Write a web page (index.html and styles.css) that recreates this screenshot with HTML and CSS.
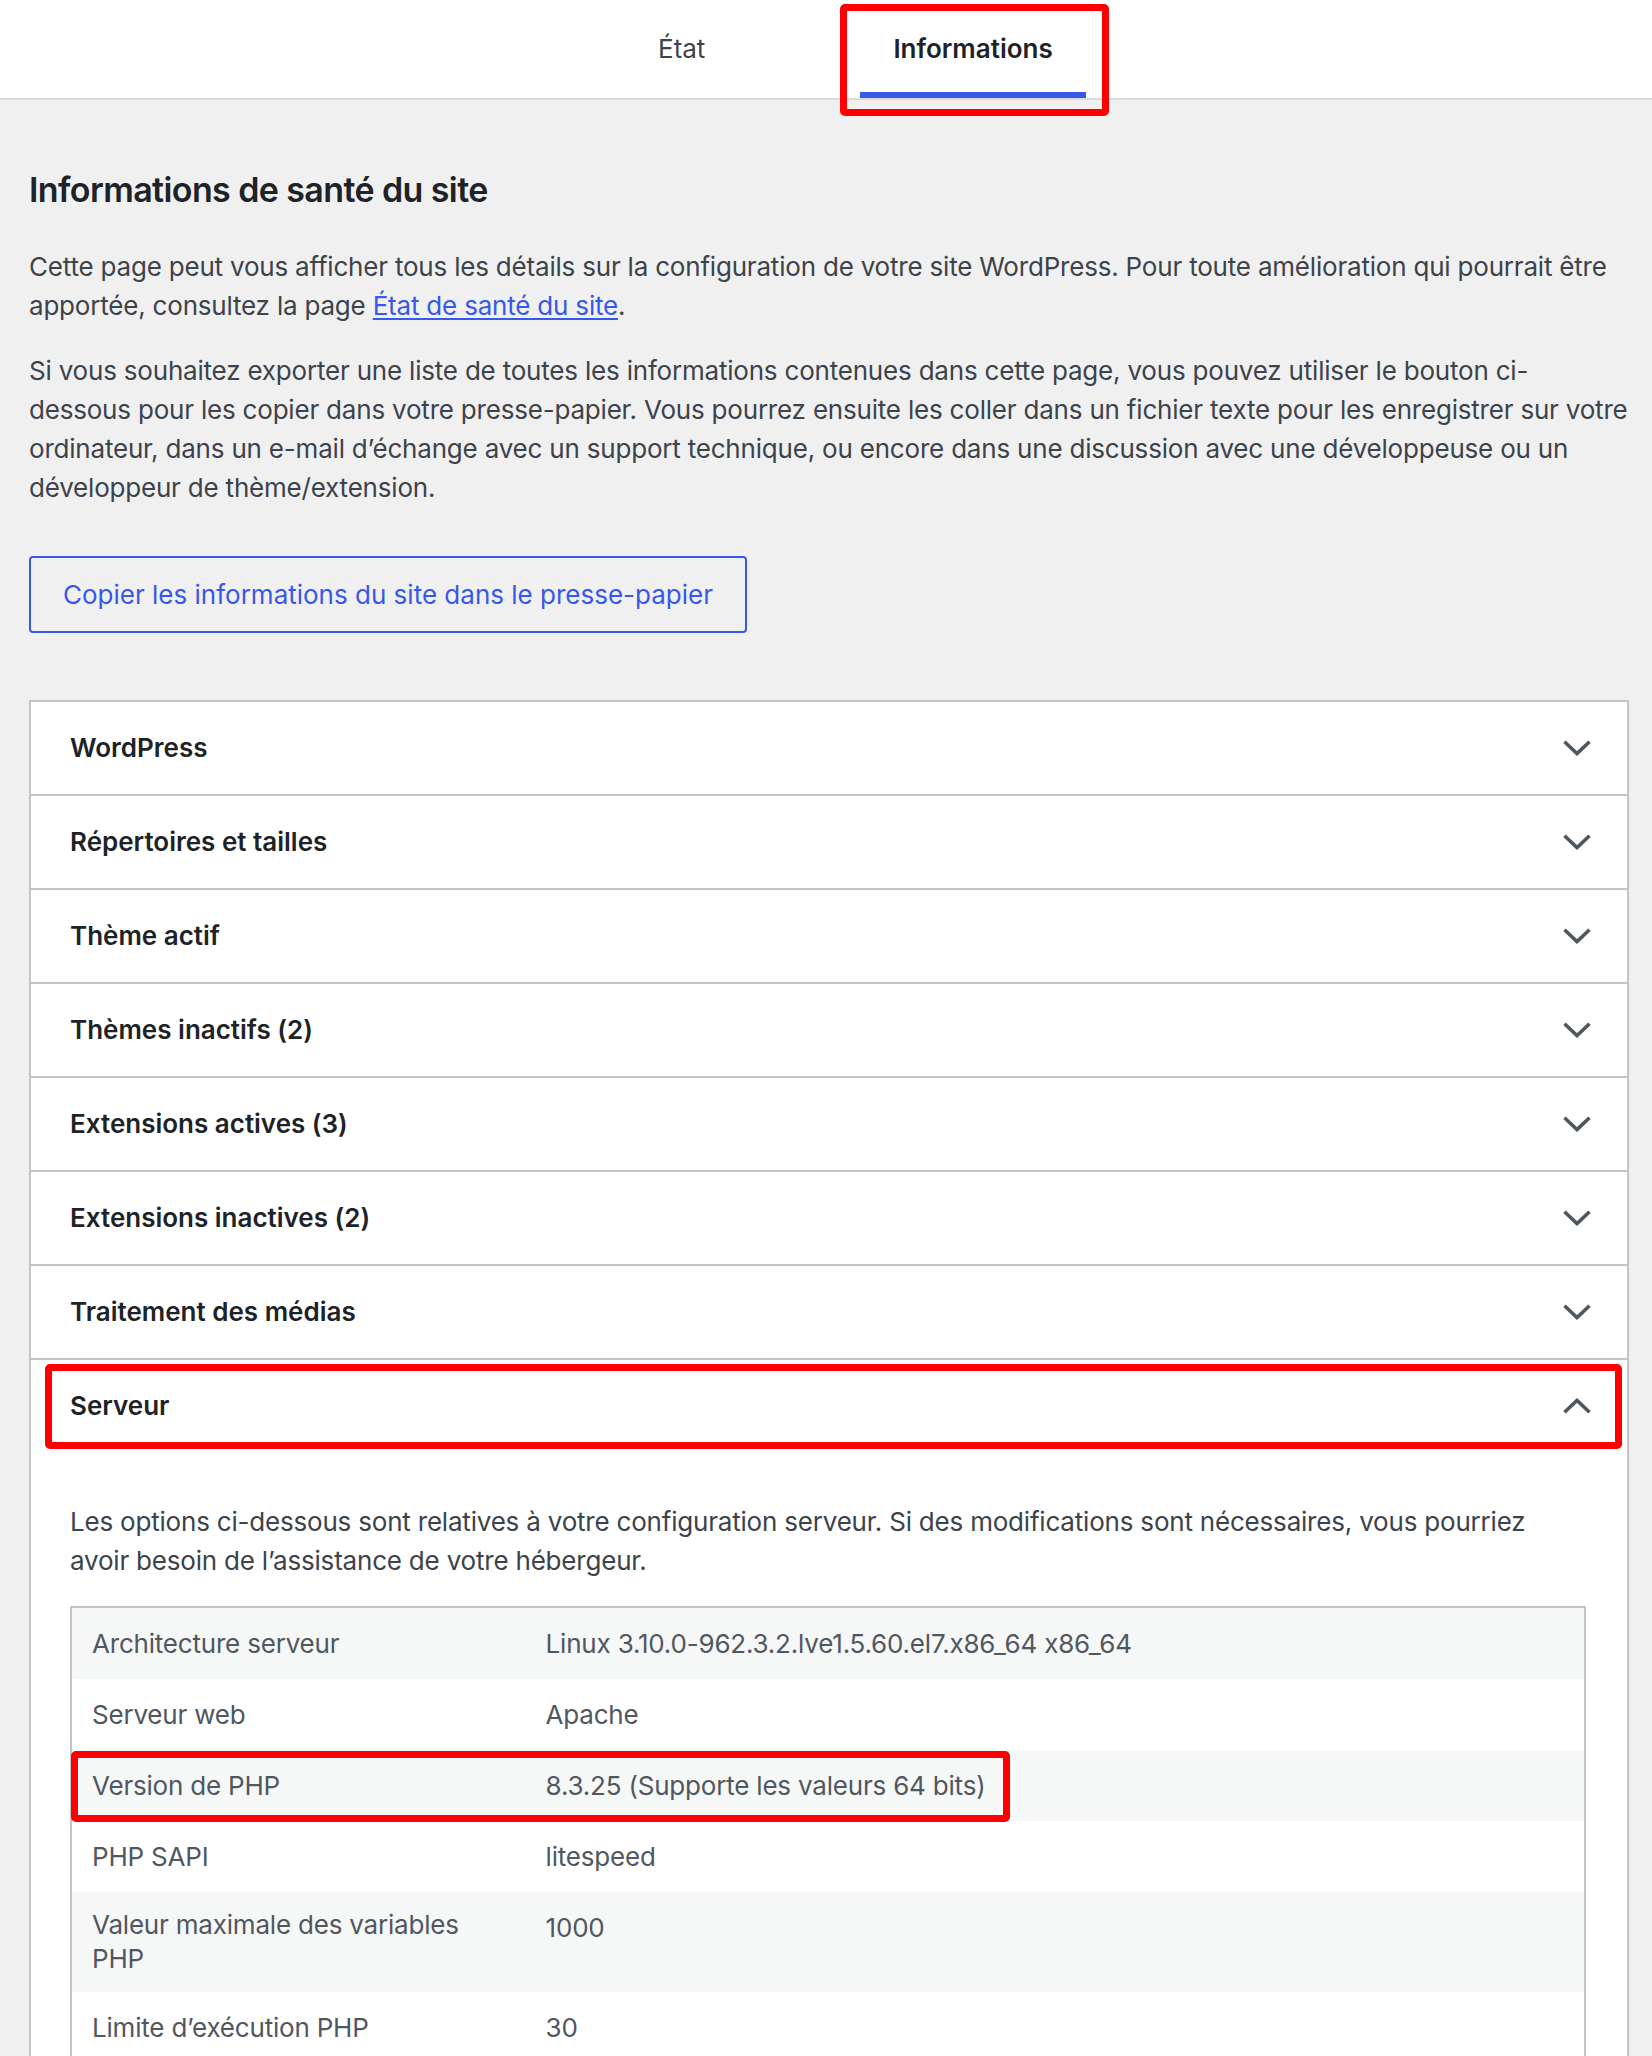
FILE: index.html
```html
<!DOCTYPE html>
<html lang="fr">
<head>
<meta charset="utf-8">
<title>Informations de santé du site</title>
<link rel="stylesheet" href="styles.css">
</head>
<body>
<header class="tabs">
  <nav class="tab-list">
    <a class="tab">État</a>
    <a class="tab tab-active">Informations<span class="mark mark-tab"></span></a>
  </nav>
</header>
<main class="content">
  <h1 class="page-title">Informations de santé du site</h1>
  <p class="text">Cette page peut vous afficher tous les détails sur la configuration de votre site WordPress. Pour toute amélioration qui pourrait être apportée, consultez la page <a class="link">État de santé du site</a>.</p>
  <p class="text">Si vous souhaitez exporter une liste de toutes les informations contenues dans cette page, vous pouvez utiliser le bouton ci-<br>dessous pour les copier dans votre presse-papier. Vous pourrez ensuite les coller dans un fichier texte pour les enregistrer sur votre ordinateur, dans un e-mail d’échange avec un support technique, ou encore dans une discussion avec une développeuse ou un développeur de thème/extension.</p>
  <div class="actions">
    <button class="copy-btn" type="button">Copier les informations du site dans le presse-papier</button>
  </div>
  <div class="accordion">
    <section class="acc-item">
      <div class="acc-head"><span>WordPress</span><svg class="chev" viewBox="0 0 28 16" width="28" height="16"><path d="M1.5 1.8 L14 13.6 L26.5 1.8"/></svg></div>
    </section>
    <section class="acc-item">
      <div class="acc-head"><span>Répertoires et tailles</span><svg class="chev" viewBox="0 0 28 16" width="28" height="16"><path d="M1.5 1.8 L14 13.6 L26.5 1.8"/></svg></div>
    </section>
    <section class="acc-item">
      <div class="acc-head"><span>Thème actif</span><svg class="chev" viewBox="0 0 28 16" width="28" height="16"><path d="M1.5 1.8 L14 13.6 L26.5 1.8"/></svg></div>
    </section>
    <section class="acc-item">
      <div class="acc-head"><span>Thèmes inactifs (2)</span><svg class="chev" viewBox="0 0 28 16" width="28" height="16"><path d="M1.5 1.8 L14 13.6 L26.5 1.8"/></svg></div>
    </section>
    <section class="acc-item">
      <div class="acc-head"><span>Extensions actives (3)</span><svg class="chev" viewBox="0 0 28 16" width="28" height="16"><path d="M1.5 1.8 L14 13.6 L26.5 1.8"/></svg></div>
    </section>
    <section class="acc-item">
      <div class="acc-head"><span>Extensions inactives (2)</span><svg class="chev" viewBox="0 0 28 16" width="28" height="16"><path d="M1.5 1.8 L14 13.6 L26.5 1.8"/></svg></div>
    </section>
    <section class="acc-item">
      <div class="acc-head"><span>Traitement des médias</span><svg class="chev" viewBox="0 0 28 16" width="28" height="16"><path d="M1.5 1.8 L14 13.6 L26.5 1.8"/></svg></div>
    </section>
    <section class="acc-item">
      <div class="acc-head"><span>Serveur</span><svg class="chev chev-up" viewBox="0 0 28 16" width="28" height="16"><path d="M1.5 14.2 L14 2.4 L26.5 14.2"/></svg><span class="mark mark-head"></span></div>
      <div class="acc-panel">
        <p class="text">Les options ci-dessous sont relatives à votre configuration serveur. Si des modifications sont nécessaires, vous pourriez avoir besoin de l’assistance de votre hébergeur.</p>
        <table class="info-table">
          <tbody>
            <tr><td class="label">Architecture serveur</td><td class="value">Linux 3.10.0-962.3.2.lve1.5.60.el7.x86_64 x86_64</td></tr>
            <tr><td class="label">Serveur web</td><td class="value">Apache</td></tr>
            <tr><td class="label">Version de PHP<span class="mark mark-row"></span></td><td class="value">8.3.25 (Supporte les valeurs 64 bits)</td></tr>
            <tr><td class="label">PHP SAPI</td><td class="value">litespeed</td></tr>
            <tr><td class="label">Valeur maximale des variables PHP</td><td class="value">1000</td></tr>
            <tr><td class="label">Limite d’exécution PHP</td><td class="value">30</td></tr>
          </tbody>
        </table>
      </div>
    </section>
  </div>
</main>
</body>
</html>
```

FILE: styles.css
```css
* { box-sizing: border-box; }

html, body {
  margin: 0;
  padding: 0;
}

body {
  background: #f0f0f1;
  font-family: "Inter", "Noto Sans", sans-serif;
  font-feature-settings: "calt" 0;
  font-size: 26px;
  line-height: 39px;
  color: #3c434a;
  min-height: 2056px;
}

/* ---------- tabs ---------- */
.tabs {
  background: #fff;
  border-bottom: 2px solid #dcdcde;
}

.tab-list {
  display: flex;
  height: 98px;
  padding-left: 625px;
  gap: 122px;
}

.tab {
  position: relative;
  display: flex;
  align-items: center;
  padding: 0 33px;
  color: #3c434a;
  font-size: 26px;
  line-height: 40px;
  text-decoration: none;
}

.tab-active {
  font-weight: 600;
  color: #1d2327;
  box-shadow: inset 0 -6px 0 #3858e9;
}

/* ---------- annotation marks ---------- */
.mark {
  position: absolute;
  border: 7px solid #ff0000;
  border-radius: 5px;
  pointer-events: none;
  z-index: 5;
}

.mark-tab {
  top: 4px;
  left: -20px;
  right: -23px;
  height: 112px;
}

.mark-head {
  top: 4px;
  bottom: 3px;
  left: 14px;
  right: 5px;
}

.mark-row {
  top: 1px;
  left: -1px;
  width: 939px;
  height: 71px;
}

/* ---------- content ---------- */
.content {
  padding: 0 23px 0 29px;
}

.page-title {
  margin: 68px 0 35px;
  font-size: 34px;
  line-height: 44px;
  font-weight: 600;
  letter-spacing: -0.6px;
  color: #1d2327;
}

.text {
  margin: 26px 0;
  font-size: 26px;
  line-height: 39px;
  letter-spacing: -0.2px;
  color: #3c434a;
}

.page-title + .text {
  margin-top: 0;
}

.link {
  color: #3858e9;
  text-decoration: underline;
  text-decoration-thickness: 2px;
  text-underline-offset: 3px;
}

.actions {
  display: flex;
  margin-top: 49px;
}

.copy-btn {
  display: inline-flex;
  align-items: center;
  height: 77px;
  padding: 0 32px;
  border: 2px solid #3858e9;
  border-radius: 4px;
  background: transparent;
  color: #3858e9;
  font-family: "Inter", "Noto Sans", sans-serif;
  font-feature-settings: "calt" 0;
  font-size: 26px;
  font-weight: 400;
  line-height: 39px;
}

/* ---------- accordion ---------- */
.accordion {
  margin-top: 67px;
  background: #fff;
  border-left: 2px solid #c3c4c7;
  border-right: 2px solid #c3c4c7;
}

.acc-item {
  border-top: 2px solid #c3c4c7;
}

.acc-head {
  position: relative;
  display: flex;
  align-items: center;
  justify-content: space-between;
  padding: 26px 36px 26px 39px;
  font-size: 26px;
  line-height: 40px;
  font-weight: 600;
  color: #1d2327;
}

.chev {
  display: block;
  flex: none;
}

.chev path {
  fill: none;
  stroke: #50575e;
  stroke-width: 3.6;
  stroke-linejoin: miter;
}

.acc-panel {
  padding: 24px 41px 0 39px;
}

.info-table {
  width: 100%;
  table-layout: fixed;
  border-collapse: separate;
  border-spacing: 0;
  border: 2px solid #c3c4c7;
  background: #fff;
}

.info-table tr:nth-child(odd) td {
  background: #f6f7f7;
}

.info-table td {
  padding: 16px 20px;
  vertical-align: top;
  font-size: 26px;
  line-height: 39px;
  letter-spacing: -0.2px;
  color: #50575e;
}

.info-table td.label {
  position: relative;
  width: 30%;
  line-height: 34px;
  vertical-align: middle;
}
```
